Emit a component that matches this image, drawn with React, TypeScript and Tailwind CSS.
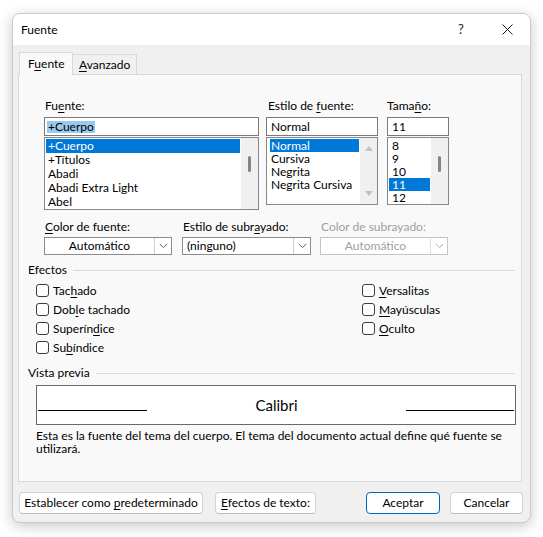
import React from "react";

const K = ({ children }: { children: React.ReactNode }) => (
  <span className="underline decoration-1 underline-offset-2">{children}</span>
);

const fonts = ["+Cuerpo", "+Títulos", "Abadi", "Abadi Extra Light", "Abel"];
const styles = ["Normal", "Cursiva", "Negrita", "Negrita Cursiva"];
const sizes = ["8", "9", "10", "11", "12"];

const Chevron = ({ color = "#5f5f5f" }: { color?: string }) => (
  <svg width="9" height="6" viewBox="0 0 9 6" fill="none">
    <path d="M0.8 1 L4.5 4.6 L8.2 1" stroke={color} strokeWidth="1" />
  </svg>
);

const Thumb = () => (
  <div className="w-[17px] bg-[#f0f0f0] flex justify-center">
    <div className="mt-[18px] w-[3px] h-[16px] rounded-full bg-[#858585]" />
  </div>
);

const Check = ({ children }: { children: React.ReactNode }) => (
  <div className="h-[19px] flex items-center">
    <div className="w-[13px] h-[13px] rounded-[3px] border border-[#3c3c3c] bg-white" />
    <span className="ml-[4px]">{children}</span>
  </div>
);

const Section = ({ title }: { title: string }) => (
  <div className="ml-[9px] mr-[6px] h-[16px] flex items-center">
    <span className="leading-[16px]">{title}</span>
    <div className="ml-[6px] flex-1 h-px bg-[#dcdcdc]" />
  </div>
);

export default function App() {
  return (
    <div className="w-[543px] h-[537px] bg-white pt-[13px] pl-[12px] font-['Lato',sans-serif] text-[12px] text-black">
      <div className="w-[519px] h-[510px] rounded-[8px] border border-[#c9c9c9] bg-[#f0f0f0] overflow-hidden flex flex-col shadow-[0_3px_14px_rgba(0,0,0,0.22)]">
        {/* title bar */}
        <div className="h-[31px] bg-white flex items-center">
          <span className="pl-[8px]">Fuente</span>
          <div className="ml-auto flex h-full">
            <div className="w-[46px] flex items-center justify-center text-[13px] text-[#1a1a1a]">?</div>
            <div className="w-[46px] flex items-center justify-center">
              <svg width="11" height="11" viewBox="0 0 11 11">
                <path d="M0.5 0.5 L10.5 10.5 M10.5 0.5 L0.5 10.5" stroke="#1a1a1a" strokeWidth="1" />
              </svg>
            </div>
          </div>
        </div>

        <div className="flex-1 px-[5px] pt-[7px]">
          {/* tabs */}
          <div className="flex items-end">
            <div className="ml-[1px] h-[23px] -mb-px relative z-10 w-[54px] bg-[#f9f9f9] border-l border-t border-r border-[#d9d9d9] pl-[8px] pt-[3px] leading-[16px]">
              F<K>u</K>ente
            </div>
            <div className="h-[20px] w-[64px] bg-[#f0f0f0] border-t border-r border-[#d9d9d9] pl-[6px] pt-[2px] leading-[16px]">
              <K>A</K>vanzado
            </div>
          </div>

          {/* panel */}
          <div className="w-[504px] h-[408px] border border-[#d9d9d9] bg-[#f9f9f9]">
            <div className="flex pl-[25px] pt-[23px]">
              {/* font */}
              <div className="w-[215px]">
                <div className="h-[16px] leading-[16px] pl-[1px]">
                  Fu<K>e</K>nte:
                </div>
                <div className="mt-[3px] h-[19px] border border-[#7a7a7a] bg-white flex items-center pl-[2px]">
                  <span className="bg-[#99c9ef] leading-[12px] px-[1px]">+Cuerpo</span>
                </div>
                <div className="mt-[1px] h-[73px] border border-[#828790] bg-white flex">
                  <div className="flex-1 pt-[1px] px-[1px]">
                    {fonts.map((f, i) => (
                      <div
                        key={f}
                        className={`h-[14px] leading-[14px] pl-[2px] ${i === 0 ? "bg-[#0078d7] text-white" : ""}`}
                      >
                        {f}
                      </div>
                    ))}
                  </div>
                  <Thumb />
                </div>
              </div>

              {/* style */}
              <div className="ml-[7px] w-[112px]">
                <div className="h-[16px] leading-[16px] pl-[2px]">
                  Estilo de <K>f</K>uente:
                </div>
                <div className="mt-[3px] h-[19px] border border-[#7a7a7a] bg-white flex items-center pl-[4px]">
                  Normal
                </div>
                <div className="mt-[1px] h-[68px] border border-[#828790] bg-white flex">
                  <div className="flex-1 pt-[1px] pl-[3px] pr-[1px]">
                    {styles.map((s, i) => (
                      <div
                        key={s}
                        className={`h-[13px] leading-[13px] pl-[1px] ${i === 0 ? "bg-[#0078d7] text-white" : ""}`}
                      >
                        {s}
                      </div>
                    ))}
                  </div>
                  <div className="w-[17px] bg-[#f0f0f0] flex flex-col items-center justify-between py-[8px]">
                    <svg width="8" height="5" viewBox="0 0 8 5">
                      <path d="M4 0 L8 5 L0 5 Z" fill="#c2c2c2" />
                    </svg>
                    <svg width="8" height="5" viewBox="0 0 8 5">
                      <path d="M0 0 L8 0 L4 5 Z" fill="#c2c2c2" />
                    </svg>
                  </div>
                </div>
              </div>

              {/* size */}
              <div className="ml-[9px] w-[62px]">
                <div className="h-[16px] leading-[16px]">
                  Tama<K>ñ</K>o:
                </div>
                <div className="mt-[3px] h-[19px] border border-[#7a7a7a] bg-white flex items-center pl-[4px]">
                  11
                </div>
                <div className="mt-[1px] h-[68px] border border-[#828790] bg-white flex">
                  <div className="flex-1 pt-[1px] pl-[1px] pr-[1px]">
                    {sizes.map((s, i) => (
                      <div
                        key={s}
                        className={`h-[13px] leading-[13px] pl-[3px] ${i === 3 ? "bg-[#0078d7] text-white" : ""}`}
                      >
                        {s}
                      </div>
                    ))}
                  </div>
                  <Thumb />
                </div>
              </div>
            </div>

            {/* dropdowns */}
            <div className="flex pl-[25px] mt-[9px]">
              <div className="w-[128px]">
                <div className="h-[16px] leading-[16px] pl-[1px]">
                  <K>C</K>olor de fuente:
                </div>
                <div className="mt-[2px] h-[18px] border border-[#8c8c8c] bg-white flex">
                  <div className="flex-1 flex items-center justify-center">Automático</div>
                  <div className="w-[17px] border-l border-[#cfcfcf] flex items-center justify-center">
                    <Chevron />
                  </div>
                </div>
              </div>
              <div className="ml-[10px] w-[129px]">
                <div className="h-[16px] leading-[16px] pl-[1px]">
                  Estilo de subr<K>a</K>yado:
                </div>
                <div className="mt-[2px] h-[18px] border border-[#8c8c8c] bg-white flex">
                  <div className="flex-1 flex items-center pl-[4px]">(ninguno)</div>
                  <div className="w-[17px] border-l border-[#cfcfcf] flex items-center justify-center">
                    <Chevron />
                  </div>
                </div>
              </div>
              <div className="ml-[9px] w-[128px] text-[#a0a0a0]">
                <div className="h-[16px] leading-[16px] pl-[1px]">Color de subrayado:</div>
                <div className="mt-[2px] h-[18px] border border-[#c4c4c4] bg-white flex">
                  <div className="flex-1 flex items-center justify-center">Automático</div>
                  <div className="w-[17px] border-l border-[#dedede] flex items-center justify-center">
                    <Chevron color="#a8a8a8" />
                  </div>
                </div>
              </div>
            </div>

            {/* effects */}
            <div className="mt-[7px]">
              <Section title="Efectos" />
            </div>
            <div className="mt-[3px] pl-[17px] flex">
              <div className="w-[326px]">
                <Check>
                  Tac<K>h</K>ado
                </Check>
                <Check>
                  Dob<K>l</K>e tachado
                </Check>
                <Check>
                  Superín<K>d</K>ice
                </Check>
                <Check>
                  Su<K>b</K>índice
                </Check>
              </div>
              <div>
                <Check>
                  <K>V</K>ersalitas
                </Check>
                <Check>
                  <K>M</K>ayúsculas
                </Check>
                <Check>
                  <K>O</K>culto
                </Check>
              </div>
            </div>

            {/* preview */}
            <div className="mt-[8px]">
              <Section title="Vista previa" />
            </div>
            <div className="mt-[4px] ml-[17px] w-[480px] h-[40px] border border-[#696969] bg-white flex px-[1px]">
              <div className="mt-[24px] w-[109px] h-px bg-black" />
              <div className="flex-1 text-center mt-[10px] h-[18px] leading-[18px] text-[15px] font-['Lato',sans-serif]">
                Calibri
              </div>
              <div className="mt-[24px] w-[108px] h-px bg-black" />
            </div>
            <p className="mt-[4px] ml-[17px] leading-[13px]">
              Esta es la fuente del tema del cuerpo. El tema del documento actual define qué fuente se
              <br />
              utilizará.
            </p>
          </div>

          {/* buttons */}
          <div className="mt-[10px] flex">
            <button className="ml-[1px] w-[184px] h-[22px] bg-white border border-[#d3d3d3] border-b-[#bdbdbd] rounded-[4px]">
              Establecer como <K>p</K>redeterminado
            </button>
            <button className="ml-[12px] w-[101px] h-[22px] bg-white border border-[#d3d3d3] border-b-[#bdbdbd] rounded-[4px]">
              <K>E</K>fectos de texto:
            </button>
            <button className="ml-auto w-[74px] h-[22px] bg-white border border-[#0067c0] rounded-[4px]">
              Aceptar
            </button>
            <button className="ml-[10px] mr-[2px] w-[73px] h-[22px] bg-white border border-[#d3d3d3] border-b-[#bdbdbd] rounded-[4px]">
              Cancelar
            </button>
          </div>
        </div>
      </div>
    </div>
  );
}
